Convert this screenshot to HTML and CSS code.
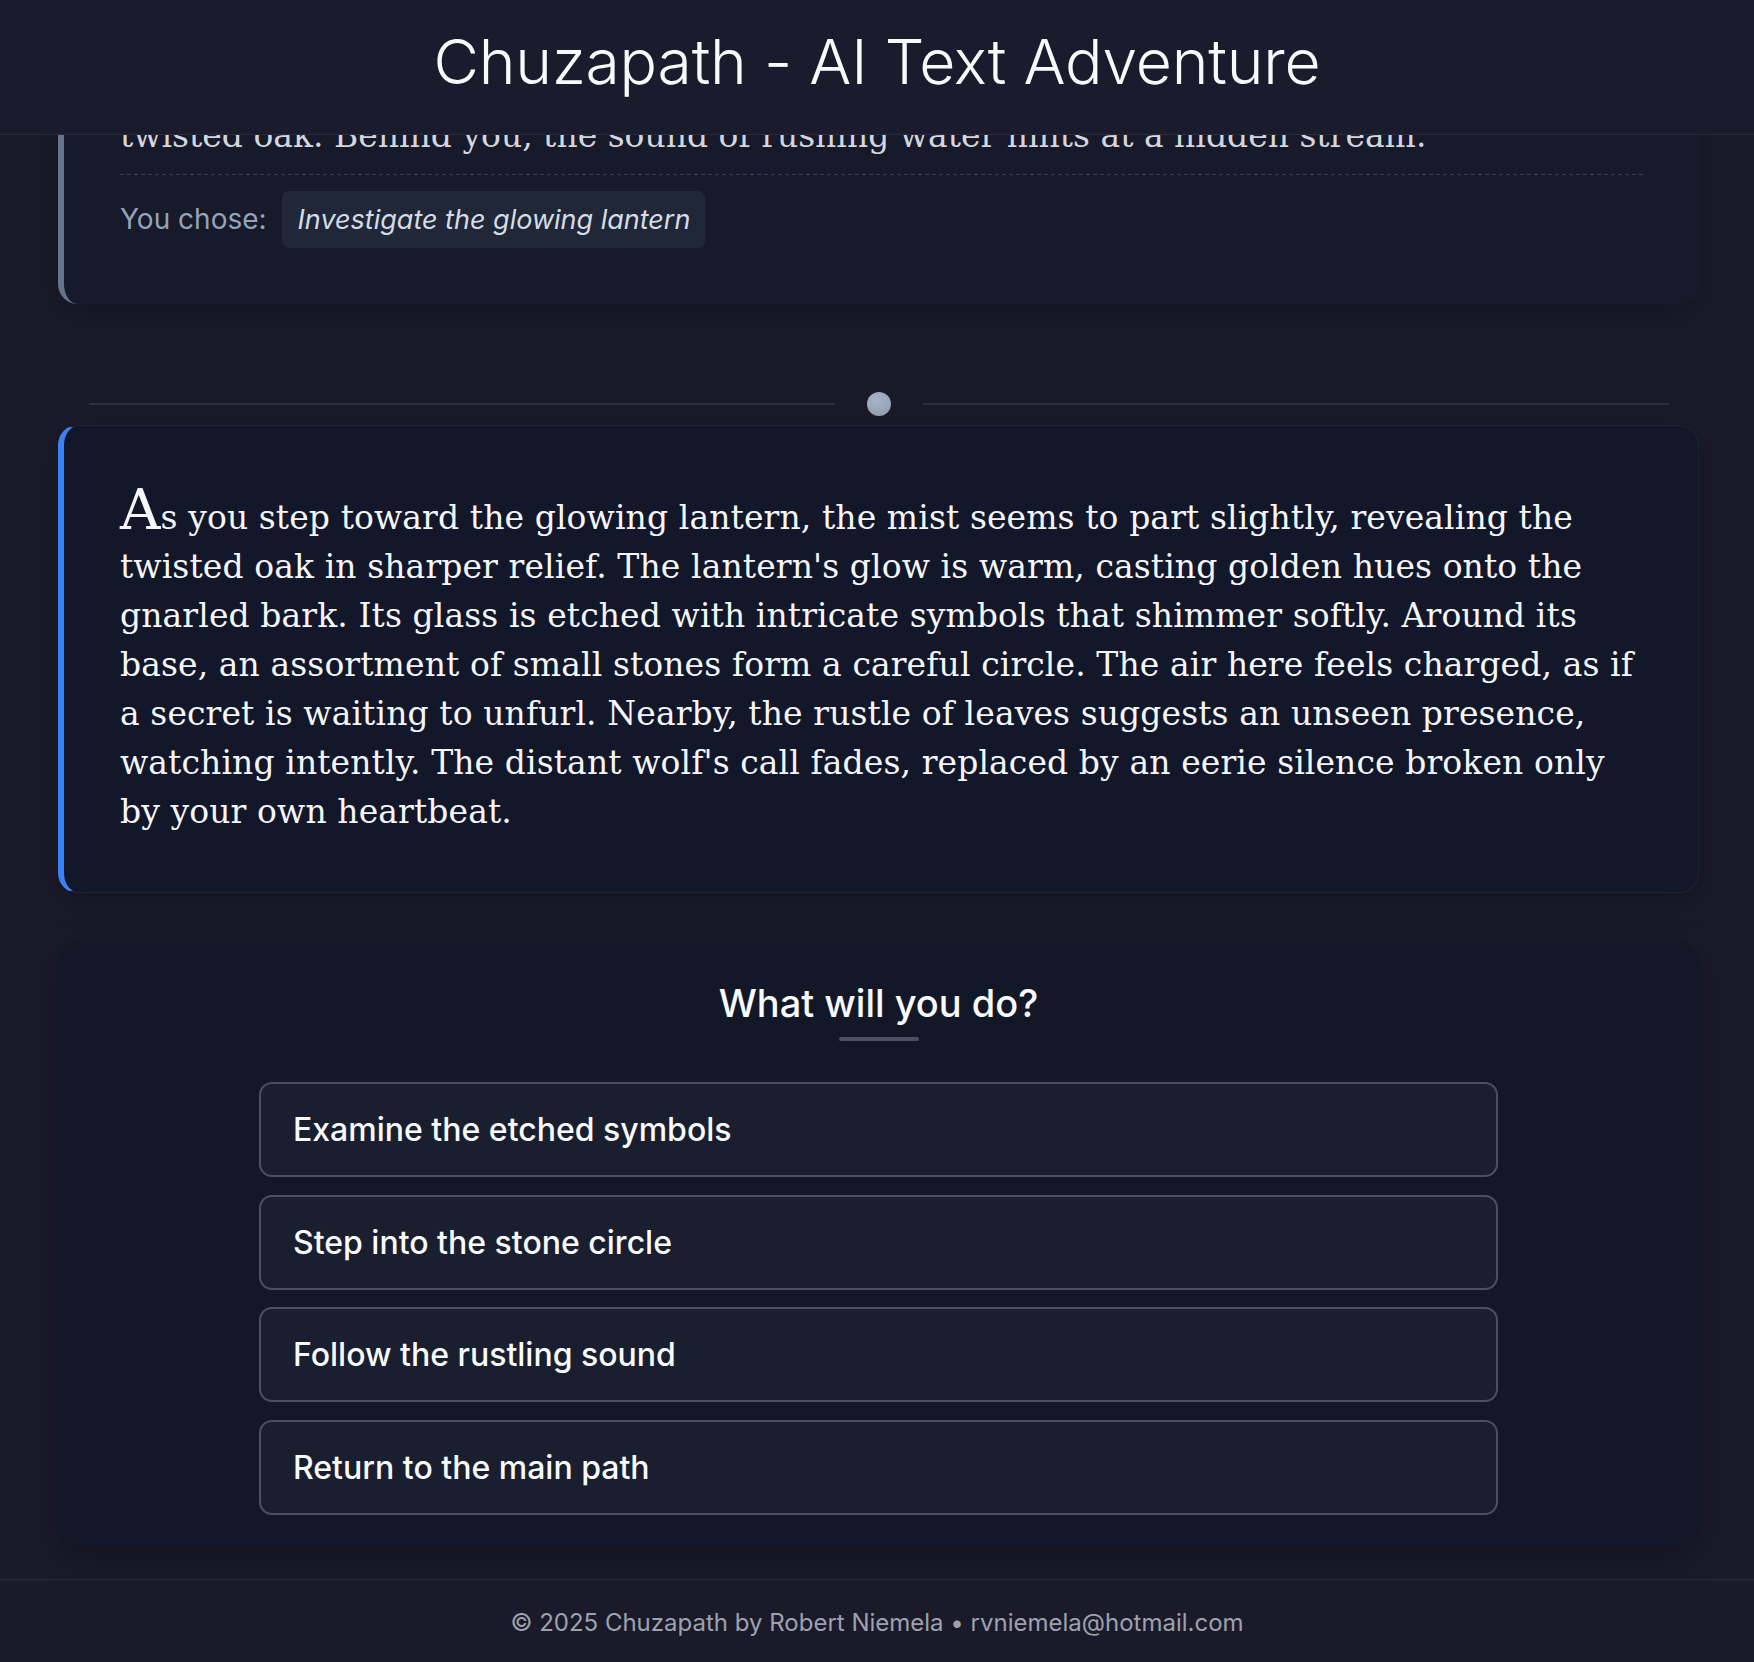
FILE: index.html
```html
<!DOCTYPE html>
<html lang="en">
<head>
<meta charset="utf-8">
<title>Chuzapath - AI Text Adventure</title>
<link rel="stylesheet" href="styles.css">
</head>
<body>
<header class="site-header">
  <h1 class="site-title">Chuzapath - AI Text Adventure</h1>
</header>
<main class="viewport">
  <div class="log">
    <article class="entry entry--past">
      <p class="entry-text">twisted oak. Behind you, the sound of rushing water hints at a hidden stream.</p>
      <div class="choice-made">
        <span class="choice-label">You chose:</span>
        <span class="choice-pill">Investigate the glowing lantern</span>
      </div>
    </article>

    <div class="divider">
      <span class="divider-line"></span>
      <span class="divider-dot"></span>
      <span class="divider-line"></span>
    </div>

    <article class="entry entry--current">
      <p class="story-text">As you step toward the glowing lantern, the mist seems to part slightly, revealing the twisted oak in sharper relief. The lantern's glow is warm, casting golden hues onto the gnarled bark. Its glass is etched with intricate symbols that shimmer softly. Around its base, an assortment of small stones form a careful circle. The air here feels charged, as if a secret is waiting to unfurl. Nearby, the rustle of leaves suggests an unseen presence, watching intently. The distant wolf's call fades, replaced by an eerie silence broken only by your own heartbeat.</p>
    </article>

    <section class="choices">
      <h2 class="choices-title">What will you do?</h2>
      <div class="choices-rule"></div>
      <div class="choice-list">
        <button class="choice-btn">Examine the etched symbols</button>
        <button class="choice-btn">Step into the stone circle</button>
        <button class="choice-btn">Follow the rustling sound</button>
        <button class="choice-btn">Return to the main path</button>
      </div>
    </section>
  </div>
</main>
<footer class="site-footer">© 2025 Chuzapath by Robert Niemela • rvniemela@hotmail.com</footer>
</body>
</html>
```

FILE: styles.css
```css
* { box-sizing: border-box; }

html, body {
  margin: 0;
  padding: 0;
}

body {
  height: 100vh;
  display: flex;
  flex-direction: column;
  overflow: hidden;
  background: #1b1a2a;
  color: #f1f5f9;
  font-family: Inter, "Noto Sans", "Liberation Sans", sans-serif;
}

/* Header */
.site-header {
  flex: none;
  height: 135px;
  padding-top: 24px;
  background: #1a1c2e;
  border-bottom: 1px solid #2a2c3d;
  text-align: center;
}

.site-title {
  margin: 0;
  font-size: 62.4px;
  font-weight: 300;
  line-height: 76px;
  color: #f8fafc;
  letter-spacing: -0.2px;
}

/* Scrolled viewport */
.viewport {
  flex: 1;
  min-height: 0;
  overflow: hidden;
  display: flex;
  flex-direction: column;
  justify-content: flex-end;
  padding: 0 55px 32px 58px;
}

.log {
  flex: none;
  display: flex;
  flex-direction: column;
}

/* Story entries */
.entry {
  border-radius: 20px;
  padding: 56px;
  box-shadow: 0 10px 30px rgba(0, 0, 0, 0.22);
}

.entry--past {
  background: #161a2a;
  border-left: 6px solid #64748b;
}

.entry--current {
  margin-top: 9px;
  background: #121729;
  border: 1px solid #1f2434;
  border-left: 6px solid #3b82f6;
}

.entry-text,
.story-text {
  margin: 0;
  font-family: "DejaVu Serif", "Liberation Serif", serif;
  font-size: 33px;
  line-height: 49px;
}

.entry-text {
  color: #d3d6de;
}

.story-text {
  color: #f5f6fa;
  letter-spacing: 0.1px;
}

.story-text::first-letter {
  font-size: 56px;
  line-height: 1;
}

.choice-made {
  margin-top: 14px;
  padding-top: 17px;
  background: repeating-linear-gradient(to right, #3a4052 0 4px, transparent 4px 7px) top left / 100% 1px no-repeat;
  display: flex;
  align-items: center;
  gap: 15px;
}

.choice-label {
  font-size: 28px;
  line-height: 41px;
  color: #94a3b8;
}

.choice-pill {
  padding: 8px 15px 8px 16px;
  border-radius: 7px;
  background: #1f2738;
  font-size: 27px;
  line-height: 41px;
  font-style: italic;
  color: #d6dce6;
}

/* Divider */
.divider {
  margin: 88px 30px 0 31px;
  height: 24px;
  display: flex;
  align-items: center;
}

.divider-line {
  flex: 1;
  height: 2px;
  background: #2d2e41;
}

.divider-dot {
  width: 24px;
  height: 24px;
  margin: 0 32px;
  border-radius: 50%;
  background: radial-gradient(circle at 40% 35%, #a7b3c6, #8f9bb1);
}

/* Choices */
.choices {
  margin-top: 50px;
  padding: 37px 56px 32px;
  border-radius: 20px;
  background: #131829;
  box-shadow: 0 10px 34px rgba(0, 0, 0, 0.28);
  display: flex;
  flex-direction: column;
  align-items: center;
}

.choices-title {
  margin: 0;
  font-size: 38px;
  font-weight: 500;
  line-height: 46px;
  color: #f8fafc;
}

.choices-rule {
  margin-top: 11px;
  width: 80px;
  height: 4px;
  border-radius: 2px;
  background: #4a5062;
}

.choice-list {
  margin-top: 41px;
  width: 1239px;
  display: flex;
  flex-direction: column;
  gap: 17.6px;
}

.choice-btn {
  display: block;
  width: 100%;
  padding: 21px 32px;
  border: 2px solid #4a5061;
  border-radius: 13px;
  background: #1a1f30;
  color: #f8fafc;
  font-family: Inter, "Noto Sans", "Liberation Sans", sans-serif;
  font-size: 32px;
  font-weight: 500;
  line-height: 49px;
  text-align: left;
  cursor: pointer;
}

/* Footer */
.site-footer {
  flex: none;
  padding: 25px 0 21px;
  border-top: 1px solid #2a2a3b;
  background: #1b1a2a;
  text-align: center;
  font-size: 24px;
  line-height: 36px;
  color: #9ca3af;
}
```
